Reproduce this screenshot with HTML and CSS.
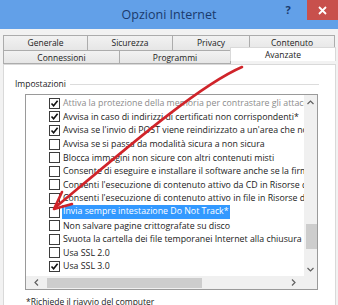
FILE: index.html
```html
<!DOCTYPE html>
<html lang="it">
<head>
  <meta charset="UTF-8">
  <title>Opzioni Internet</title>
  <link rel="stylesheet" href="styles.css">
</head>
<body>
  <div class="window">
    <div class="titlebar">
      <span></span>
      <span class="title">Opzioni Internet</span>
      <div class="caption-buttons">
        <span class="help">?</span>
        <span class="close">
          <svg width="9" height="9" viewBox="0 0 9 9"><path d="M1 1 L8 8 M8 1 L1 8" stroke="#fff" stroke-width="1.8"/></svg>
        </span>
      </div>
    </div>

    <div class="tabs">
      <div class="tabrow">
        <span class="tab" style="width:85px">Generale</span>
        <span class="tab" style="width:86px">Sicurezza</span>
        <span class="tab" style="width:78px">Privacy</span>
        <span class="tab" style="width:86px">Contenuto</span>
      </div>
      <div class="tabrow">
        <span class="tab" style="width:117px">Connessioni</span>
        <span class="tab" style="width:112px">Programmi</span>
        <span class="tab selected" style="width:106px">Avanzate</span>
      </div>
    </div>

    <div class="panel">
      <div class="group-head">
        <span>Impostazioni</span>
        <span class="line"></span>
      </div>

      <div class="listbox">
        <div class="rows">
          <div class="row disabled"><span class="check on"></span><span>Attiva la protezione della memoria per contrastare gli attacchi online*</span></div>
          <div class="row"><span class="check on"></span><span>Avvisa in caso di indirizzi di certificati non corrispondenti*</span></div>
          <div class="row"><span class="check on"></span><span>Avvisa se l'invio di POST viene reindirizzato a un'area che non consente l'invio</span></div>
          <div class="row"><span class="check"></span><span>Avvisa se si passa da modalità sicura a non sicura</span></div>
          <div class="row"><span class="check"></span><span>Blocca immagini non sicure con altri contenuti misti</span></div>
          <div class="row"><span class="check"></span><span>Consente di eseguire e installare il software anche se la firma non è valida</span></div>
          <div class="row"><span class="check"></span><span>Consenti l'esecuzione di contenuto attivo da CD in Risorse del computer*</span></div>
          <div class="row"><span class="check"></span><span>Consenti l'esecuzione di contenuto attivo in file in Risorse del computer*</span></div>
          <div class="row"><span class="check"></span><span class="selected-text">Invia sempre intestazione Do Not Track*</span></div>
          <div class="row"><span class="check"></span><span>Non salvare pagine crittografate su disco</span></div>
          <div class="row"><span class="check"></span><span>Svuota la cartella dei file temporanei Internet alla chiusura del browser</span></div>
          <div class="row"><span class="check"></span><span>Usa SSL 2.0</span></div>
          <div class="row"><span class="check on"></span><span>Usa SSL 3.0</span></div>
        </div>
        <div class="vscroll">
          <svg width="7" height="5" viewBox="0 0 7 5"><path d="M0.5 4 L3.5 1 L6.5 4" fill="none" stroke="#606060" stroke-width="1.2"/></svg>
          <div class="vthumb"></div>
          <svg width="7" height="5" viewBox="0 0 7 5"><path d="M0.5 1 L3.5 4 L6.5 1" fill="none" stroke="#606060" stroke-width="1.2"/></svg>
        </div>
        <div class="hscroll">
          <svg width="5" height="7" viewBox="0 0 5 7"><path d="M4 0.5 L1 3.5 L4 6.5" fill="none" stroke="#606060" stroke-width="1.2"/></svg>
          <div class="hthumb"></div>
          <svg width="5" height="7" viewBox="0 0 5 7"><path d="M1 0.5 L4 3.5 L1 6.5" fill="none" stroke="#606060" stroke-width="1.2"/></svg>
        </div>
        <div class="corner"></div>
      </div>

      <p class="note">*Richiede il riavvio del computer</p>
    </div>

    <!-- red annotation arrow -->
    <svg class="arrow" width="338" height="305" viewBox="0 0 338 305">
      <path d="M242 67 C200 85 130 145 57 206" fill="none" stroke="#d0242a" stroke-width="2.6" stroke-linecap="round"/>
      <path d="M54 209 L62 192 M54 209 L72 204" fill="none" stroke="#d0242a" stroke-width="2.6" stroke-linecap="round"/>
    </svg>
  </div>
</body>
</html>
```

FILE: styles.css
```css
body {
  margin: 0;
  font-family: "Open Sans", "Noto Sans", sans-serif;
  background: #f0f0f0;
}

.window {
  position: relative;
  width: 338px;
  height: 305px;
  overflow: hidden;
  background: #f2f2f2;
}

.titlebar {
  height: 29px;
  display: grid;
  grid-template-columns: 1fr auto 1fr;
  background: #62a0e8;
  color: #1a3a6c;
}

.title {
  font-size: 12.5px;
  line-height: 30px;
}

.caption-buttons {
  display: flex;
  justify-content: flex-end;
  align-items: flex-start;
}

.help {
  width: 22px;
  font-size: 11px;
  font-weight: bold;
  line-height: 20px;
  text-align: center;
  margin-right: 8px;
}

.close {
  width: 31px;
  height: 20px;
  background: #c8504c;
  display: flex;
  align-items: center;
  justify-content: center;
}

.tabs {
  padding: 6px 0 0 3px;
  font-size: 8.5px;
  color: #222;
}

.tabrow {
  display: flex;
}

.tab {
  box-sizing: border-box;
  height: 16px;
  line-height: 14px;
  text-align: center;
  border: 1px solid #acacac;
  background: linear-gradient(#f2f2f2, #e6e6e6);
  margin-left: -1px;
}

.tab:first-child {
  margin-left: 0;
}

.tabrow + .tabrow {
  margin-top: -1px;
}

.tabrow + .tabrow .tab {
  height: 14px;
  line-height: 13px;
}

.tab.selected {
  position: relative;
  z-index: 1;
  height: 17px;
  margin-top: -3px;
  margin-bottom: -1px;
  line-height: 14px;
  background: #fff;
  border-color: #d9d9d9;
  border-bottom: none;
}

.panel {
  background: #fff;
  border: 1px solid #d9d9d9;
  margin: 0 2px 0 3px;
  height: 260px;
  font-size: 8.5px;
  color: #222;
}

.group-head {
  display: flex;
  align-items: center;
  margin-top: 13px;
  padding-left: 11px;
}

.group-head .line {
  flex: 1;
  height: 1px;
  background: #dcdcdc;
  margin: 1px 16px 0 4px;
}

.listbox {
  display: grid;
  grid-template-columns: 1fr 13px;
  grid-template-rows: 181px 13px;
  width: 291px;
  margin: 5px 0 0 21px;
  border: 1px solid #9a9a9a;
  font-size: 8.8px;
}

.rows {
  overflow: hidden;
  padding-top: 1.5px;
}

.row {
  display: flex;
  align-items: center;
  height: 13.6px;
  white-space: nowrap;
}

.row.disabled {
  color: #8c8c8c;
}

.check {
  flex: none;
  box-sizing: border-box;
  width: 11px;
  height: 11px;
  margin: 0 3px 0 23px;
  border: 1px solid #3c3c3c;
  background: #fff;
}

.check.on {
  background: #fff url("data:image/svg+xml,%3Csvg xmlns='http://www.w3.org/2000/svg' width='9' height='9'%3E%3Cpath d='M1.5 4.5 L3.6 6.8 L7.6 1.8' fill='none' stroke='%23111' stroke-width='1.6'/%3E%3C/svg%3E") center no-repeat;
}

.selected-text {
  background: #3399ff;
  color: #fff;
  line-height: 13.6px;
  padding: 0 1px;
  margin-left: -1px;
}

.vscroll {
  display: flex;
  flex-direction: column;
  align-items: center;
  background: #f0f0f0;
  padding: 5px 0 4px;
}

.vthumb {
  width: 11px;
  height: 25px;
  margin: 119px 0 auto 1px;
  background: #cdcdcd;
}

.hscroll {
  display: flex;
  align-items: center;
  background: #f0f0f0;
  padding: 0 8px 0 8px;
}

.hthumb {
  width: 155px;
  height: 10px;
  margin: 0 auto 0 8px;
  background: #cdcdcd;
}

.corner {
  background: #f0f0f0;
}

.note {
  margin: 6px 0 0 22px;
}

.arrow {
  position: absolute;
  left: 0;
  top: 0;
  pointer-events: none;
}
```
